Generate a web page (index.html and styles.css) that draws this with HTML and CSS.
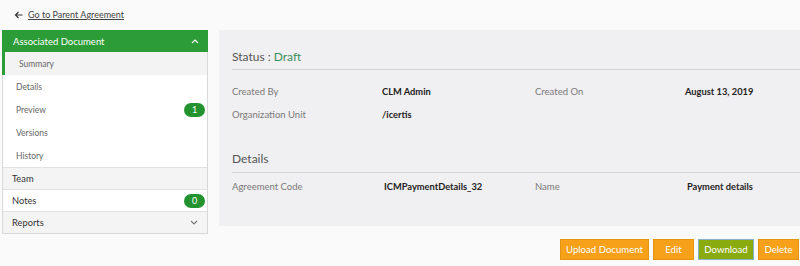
FILE: index.html
```html
<!DOCTYPE html>
<html lang="en">

<head>
    <meta charset="UTF-8">
    <meta name="viewport" content="width=device-width, initial-scale=1.0">
    <title>Agreement - Associated Document</title>
    <link rel="stylesheet" href="styles.css">
</head>

<body>
    <div class="volver">
        <svg width="9" height="8" viewBox="0 0 9 8"><path d="M8.5 4 H1.5 M4.5 1 L1.5 4 L4.5 7" fill="none" stroke="#333" stroke-width="1.2"/></svg>
        <a href="#">Go to Parent Agreement</a>
    </div>

    <div class="pagina">
        <div class="menu">
            <div class="menu-cabecera">
                <span>Associated Document</span>
                <svg width="8" height="5" viewBox="0 0 8 5"><path d="M1 4 L4 1 L7 4" fill="none" stroke="#fff" stroke-width="1.2"/></svg>
            </div>
            <div class="sub activo">Summary</div>
            <div class="sub">Details</div>
            <div class="sub">Preview <span class="badge">1</span></div>
            <div class="sub">Versions</div>
            <div class="sub">History</div>
            <div class="item gris">Team</div>
            <div class="item">Notes <span class="badge">0</span></div>
            <div class="item gris">Reports
                <svg width="8" height="5" viewBox="0 0 8 5"><path d="M1 1 L4 4 L7 1" fill="none" stroke="#777" stroke-width="1.1"/></svg>
            </div>
        </div>

        <div class="principal">
            <div class="panel">
                <h2 class="titulo">Status : <span class="verde">Draft</span></h2>
                <div class="grilla">
                    <span class="etiqueta">Created By</span>
                    <span class="valor">CLM Admin</span>
                    <span class="etiqueta">Created On</span>
                    <span class="valor">August 13, 2019</span>
                    <span class="etiqueta">Organization Unit</span>
                    <span class="valor">/icertis</span>
                    <span></span>
                    <span></span>
                </div>

                <h2 class="titulo detalles">Details</h2>
                <div class="grilla">
                    <span class="etiqueta">Agreement Code</span>
                    <span class="valor corrido">ICMPaymentDetails_32</span>
                    <span class="etiqueta">Name</span>
                    <span class="valor corrido">Payment details</span>
                </div>
            </div>

            <div class="botones">
                <button class="naranja">Upload Document</button>
                <button class="naranja corto">Edit</button>
                <button class="verde-btn">Download</button>
                <button class="naranja corto">Delete</button>
                <button class="naranja"></button>
            </div>
        </div>
    </div>
</body>

</html>
```

FILE: styles.css
```css
* {
    box-sizing: border-box;
    padding: 0;
    margin: 0;
}

body {
    font-family: Lato, "Noto Sans", sans-serif;
    background-color: #fafafa;
    color: #333;
    overflow: hidden;
}

.volver {
    padding: 7px 0 0 14px;
    font-size: 9px;
    display: flex;
    align-items: center;
    gap: 5px;
    height: 22px;
    margin-bottom: 8px;
}

.volver a {
    color: #444;
    text-decoration: underline;
}

.pagina {
    display: flex;
    align-items: flex-start;
    width: 840px;
}

.menu {
    flex: none;
    width: 206px;
    margin-left: 2px;
    background-color: #fff;
    border: 1px solid #d8d8d8;
    border-top: none;
}

.menu-cabecera {
    height: 22px;
    background-color: #2c9c36;
    color: white;
    font-size: 9.5px;
    display: flex;
    align-items: center;
    justify-content: space-between;
    padding: 0 9px 0 11px;
    margin: 0 -1px;
}

.sub {
    height: 23px;
    font-size: 8.5px;
    color: #666;
    padding-left: 13px;
    display: flex;
    align-items: center;
    justify-content: space-between;
    padding-right: 2px;
}

.sub.activo {
    background-color: #f3f3f3;
    border-left: 3px solid #2c9c36;
    padding-left: 14px;
    margin-left: -1px;
}

.item {
    height: 22px;
    font-size: 9.3px;
    color: #333;
    padding: 0 2px 0 9px;
    display: flex;
    align-items: center;
    justify-content: space-between;
    border-top: 1px solid #e2e2e2;
}

.item svg {
    margin-right: 7px;
}

.gris {
    background-color: #f4f4f4;
}

.badge {
    background-color: #22932f;
    color: white;
    font-size: 9px;
    border-radius: 8px;
    width: 21px;
    height: 14px;
    display: flex;
    align-items: center;
    justify-content: center;
}

.principal {
    flex: 1;
    margin-left: 11px;
}

.panel {
    background-color: #f0eff1;
    height: 196px;
    padding: 17px 0 0 13px;
}

.titulo {
    font-size: 12px;
    font-weight: normal;
    color: #555;
    height: 23px;
    padding-top: 2px;
    border-bottom: 1px solid #d4d4d4;
    margin-bottom: 16px;
}

.verde {
    color: #3f8f5b;
}

.detalles {
    margin-top: 24px;
    height: 24px;
    margin-bottom: 8px;
}

.grilla {
    display: grid;
    grid-template-columns: 150px 153px 150px 150px;
    row-gap: 7px;
    font-size: 9.5px;
}

.etiqueta {
    color: #7a7a7a;
    height: 16px;
}

.valor {
    color: #222;
    font-weight: bold;
    font-size: 9.3px;
}

.corrido {
    padding-left: 2px;
}

.botones {
    display: flex;
    gap: 4px;
    margin-top: 13px;
    padding-left: 341px;
}

button {
    flex: none;
    height: 21px;
    border: 1px solid #e59410;
    color: white;
    font-family: inherit;
    font-size: 9.6px;
    padding: 0 4px;
    white-space: nowrap;
    cursor: pointer;
}

.naranja {
    background-color: #f7a01a;
    width: 89px;
}

.corto {
    width: 41px;
}

.verde-btn {
    background-color: #8aab0f;
    border-color: #8ab0c8;
    width: 56px;
}
```
